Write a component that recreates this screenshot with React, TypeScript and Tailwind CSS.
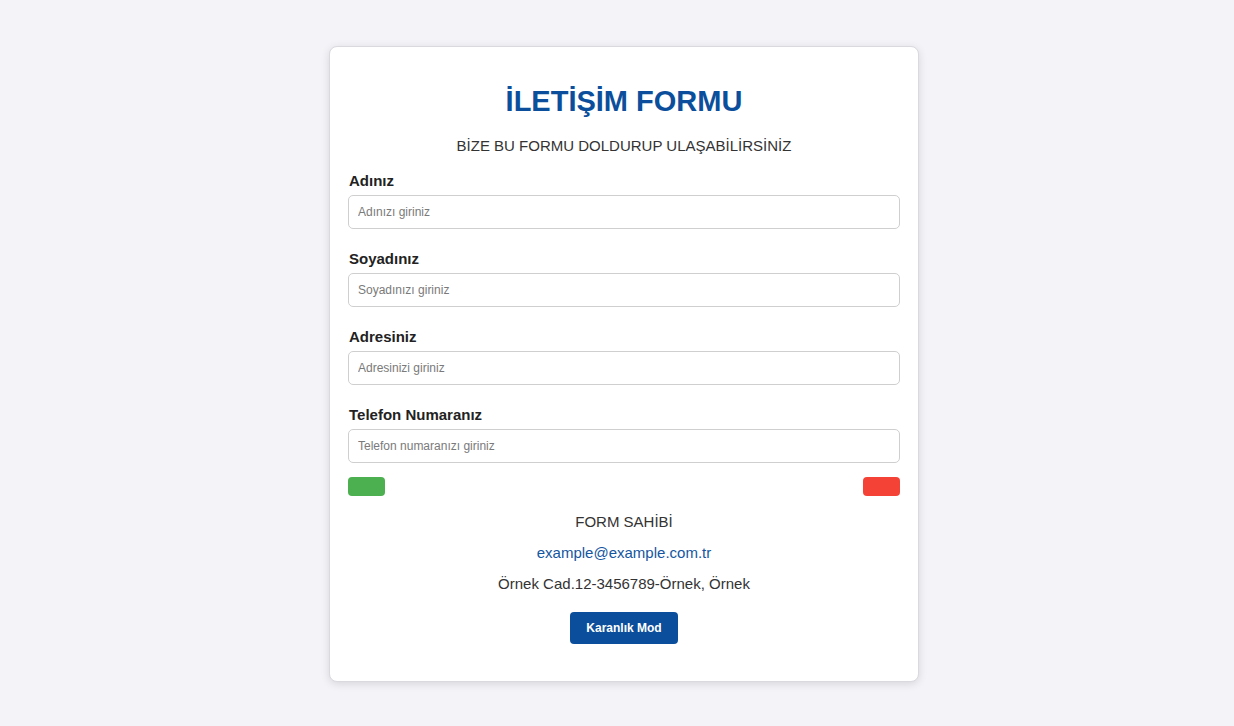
import React from 'react';

const fields = [
  { label: 'Adınız', placeholder: 'Adınızı giriniz' },
  { label: 'Soyadınız', placeholder: 'Soyadınızı giriniz' },
  { label: 'Adresiniz', placeholder: 'Adresinizi giriniz' },
  { label: 'Telefon Numaranız', placeholder: 'Telefon numaranızı giriniz' },
];

export default function App() {
  return (
    <div
      className="min-h-screen w-full bg-[#f4f4f8] flex justify-center pt-[46px] pl-[14px]"
      style={{ fontFamily: '"Liberation Sans", Arial, sans-serif' }}
    >
      <div className="w-[590px] h-[636px] bg-white border border-[#d9d9de] rounded-[8px] shadow-[0_2px_8px_rgba(0,0,0,0.12)] px-[18px] pt-[37px] pb-[36px]">
        <h1 className="text-center text-[29px] leading-[34px] font-bold text-[#0b4f9c]">
          İLETİŞİM FORMU
        </h1>
        <p className="mt-[19px] text-center text-[15px] leading-[18px] text-[#333]">
          BİZE BU FORMU DOLDURUP ULAŞABİLİRSİNİZ
        </p>

        <form className="mt-[17px]" onSubmit={(e) => e.preventDefault()}>
          {fields.map((f, i) => (
            <div key={f.label} className={i < fields.length - 1 ? 'mb-[21px]' : ''}>
              <label className="block pl-px text-[15px] leading-[18px] font-bold text-[#222]">
                {f.label}
              </label>
              <input
                type="text"
                placeholder={f.placeholder}
                className="mt-[5px] block w-full h-[34px] border border-[#cfcfcf] rounded-[5px] px-[9px] text-[12px] text-[#333] placeholder:text-[#7a7a7a] outline-none"
              />
            </div>
          ))}

          <div className="mt-[14px] flex justify-between">
            <button type="submit" className="w-[37px] h-[19px] rounded-[4px] bg-[#4caf50]" />
            <button type="reset" className="w-[37px] h-[19px] rounded-[4px] bg-[#f44336]" />
          </div>
        </form>

        <div className="mt-[17px] flex flex-col items-center text-[15px] leading-[18px] text-[#333]">
          <p>FORM SAHİBİ</p>
          <a href="#" className="mt-[13px] text-[#1456a0]">
            example@example.com.tr
          </a>
          <p className="mt-[13px]">Örnek Cad.12-3456789-Örnek, Örnek</p>
          <button className="mt-[19px] w-[108px] h-[32px] rounded-[4px] bg-[#0b4f9c] text-white text-[12px] font-bold">
            Karanlık Mod
          </button>
        </div>
      </div>
    </div>
  );
}
